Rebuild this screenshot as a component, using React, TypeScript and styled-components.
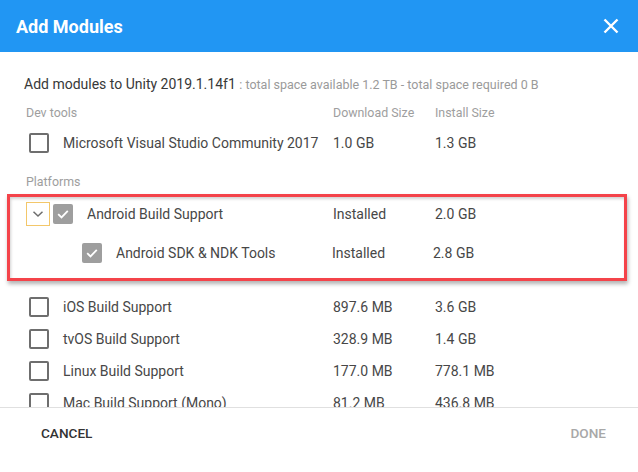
import React from "react";
import styled, { createGlobalStyle } from "styled-components";

const Global = createGlobalStyle`
  html, body { margin: 0; padding: 0; background: #ffffff; }
  body { font-family: Roboto, "Noto Sans", "Liberation Sans", sans-serif; }
  * { box-sizing: border-box; }
`;

const Dialog = styled.div`
  width: 638px;
  height: 472px;
  display: flex;
  flex-direction: column;
  background: #ffffff;
  overflow: hidden;
`;

const Header = styled.div`
  height: 52px;
  flex: none;
  background: #2196f3;
  display: flex;
  align-items: center;
  justify-content: space-between;
  padding: 0 17px 0 16px;
`;

const Title = styled.h1`
  margin: 0;
  font-size: 18px;
  font-weight: 700;
  color: #ffffff;
  letter-spacing: 0;
`;

const CloseButton = styled.button`
  border: none;
  background: transparent;
  padding: 0;
  width: 20px;
  height: 20px;
  display: flex;
  align-items: center;
  justify-content: center;
  cursor: pointer;
`;

const Body = styled.div`
  flex: 1;
  overflow: hidden;
  padding: 22px 24px 0 24px;
`;

const Subtitle = styled.div`
  font-size: 14px;
  line-height: 20px;
  color: #383838;
  white-space: nowrap;
`;

const SubtitleMeta = styled.span`
  font-size: 12.5px;
  color: #9a9a9a;
`;

const Row = styled.div<{ $h?: number; $mt?: number }>`
  display: grid;
  grid-template-columns: 309px 102px 1fr;
  align-items: center;
  height: ${(p) => p.$h ?? 32}px;
  margin-top: ${(p) => p.$mt ?? 0}px;
  font-size: 14px;
  color: #474747;
  white-space: nowrap;
`;

const SectionRow = styled(Row)`
  font-size: 12.4px;
  color: #9e9e9e;
  line-height: 16px;
`;

const SectionLabel = styled.div`
  padding-left: 2px;
`;

const LabelCell = styled.div<{ $indent: number }>`
  display: flex;
  align-items: center;
  padding-left: ${(p) => p.$indent}px;
  gap: 14px;
`;

const Lead = styled.div`
  display: flex;
  align-items: center;
  gap: 3px;
`;

const Value = styled.div<{ $shift?: number }>`
  margin-left: ${(p) => p.$shift ?? 0}px;
`;

const Box = styled.span<{ $checked?: boolean }>`
  width: 20px;
  height: 20px;
  border-radius: 2px;
  flex: none;
  display: flex;
  align-items: center;
  justify-content: center;
  border: ${(p) => (p.$checked ? "none" : "2px solid #6e6e6e")};
  background: ${(p) => (p.$checked ? "#9e9e9e" : "transparent")};
`;

const Expander = styled.span`
  width: 24px;
  height: 24px;
  flex: none;
  border: 1px solid #f3c76a;
  display: flex;
  align-items: center;
  justify-content: center;
`;

const Highlight = styled.div`
  margin: 4px -13px 0 -17px;
  border: 3px solid #f4434a;
  padding: 0 10px 8px 14px;
  box-shadow: 1px 3px 4px rgba(0, 0, 0, 0.3), inset 1px 2px 3px rgba(0, 0, 0, 0.18);
`;

const Footer = styled.div`
  height: 65px;
  flex: none;
  border-top: 1px solid #e0e0e0;
  display: flex;
  justify-content: space-between;
  align-items: flex-start;
  padding: 7px 16px 0 25px;
`;

const TextButton = styled.button<{ $disabled?: boolean }>`
  border: none;
  background: transparent;
  height: 36px;
  padding: 0 16px;
  font-family: Roboto, "Liberation Sans", sans-serif;
  font-size: 13.6px;
  font-weight: 500;
  letter-spacing: 0;
  text-transform: uppercase;
  color: ${(p) => (p.$disabled ? "#a8a8a8" : "#333333")};
`;

const Check = () => (
  <svg width="14" height="14" viewBox="0 0 14 14">
    <path d="M2.2 7.2 L5.5 10.4 L11.8 3.8" fill="none" stroke="#ffffff" strokeWidth="1.8" />
  </svg>
);

const Chevron = () => (
  <svg width="12" height="8" viewBox="0 0 12 8">
    <path d="M1.5 1.8 L6 6 L10.5 1.8" fill="none" stroke="#6d6d6d" strokeWidth="1.5" />
  </svg>
);

const CloseIcon = () => (
  <svg width="16" height="16" viewBox="0 0 16 16">
    <path d="M1.5 1.5 L14.5 14.5 M14.5 1.5 L1.5 14.5" stroke="#ffffff" strokeWidth="2.4" />
  </svg>
);

type Mod = { name: string; dl: string; inst: string };

const platforms: Mod[] = [
  { name: "iOS Build Support", dl: "897.6 MB", inst: "3.6 GB" },
  { name: "tvOS Build Support", dl: "328.9 MB", inst: "1.4 GB" },
  { name: "Linux Build Support", dl: "177.0 MB", inst: "778.1 MB" },
  { name: "Mac Build Support (Mono)", dl: "81.2 MB", inst: "436.8 MB" },
];

export default function App() {
  return (
    <>
      <Global />
      <Dialog>
        <Header>
          <Title>Add Modules</Title>
          <CloseButton aria-label="close">
            <CloseIcon />
          </CloseButton>
        </Header>
        <Body>
          <Subtitle>
            Add modules to Unity 2019.1.14f1{" "}
            <SubtitleMeta>: total space available 1.2 TB - total space required 0 B</SubtitleMeta>
          </Subtitle>

          <SectionRow $h={16} $mt={10}>
            <SectionLabel>Dev tools</SectionLabel>
            <div>Download Size</div>
            <div>Install Size</div>
          </SectionRow>

          <Row $mt={6}>
            <LabelCell $indent={5}>
              <Box />
              <span>Microsoft Visual Studio Community 2017</span>
            </LabelCell>
            <Value>1.0 GB</Value>
            <Value>1.3 GB</Value>
          </Row>

          <SectionRow $h={16} $mt={15}>
            <SectionLabel>Platforms</SectionLabel>
          </SectionRow>

          <Highlight>
            <Row $h={34}>
              <LabelCell $indent={2}>
                <Lead>
                  <Expander>
                    <Chevron />
                  </Expander>
                  <Box $checked>
                    <Check />
                  </Box>
                </Lead>
                <span>Android Build Support</span>
              </LabelCell>
              <Value>Installed</Value>
              <Value>2.0 GB</Value>
            </Row>
            <Row $h={34} $mt={5}>
              <LabelCell $indent={58}>
                <Box $checked>
                  <Check />
                </Box>
                <span>Android SDK &amp; NDK Tools</span>
              </LabelCell>
              <Value $shift={-1}>Installed</Value>
              <Value $shift={-2}>2.8 GB</Value>
            </Row>
          </Highlight>

          {platforms.map((m, i) => (
            <Row key={m.name} $mt={i === 0 ? 10 : 0}>
              <LabelCell $indent={5}>
                <Box />
                <span>{m.name}</span>
              </LabelCell>
              <Value>{m.dl}</Value>
              <Value>{m.inst}</Value>
            </Row>
          ))}
        </Body>
        <Footer>
          <TextButton>Cancel</TextButton>
          <TextButton $disabled>Done</TextButton>
        </Footer>
      </Dialog>
    </>
  );
}
